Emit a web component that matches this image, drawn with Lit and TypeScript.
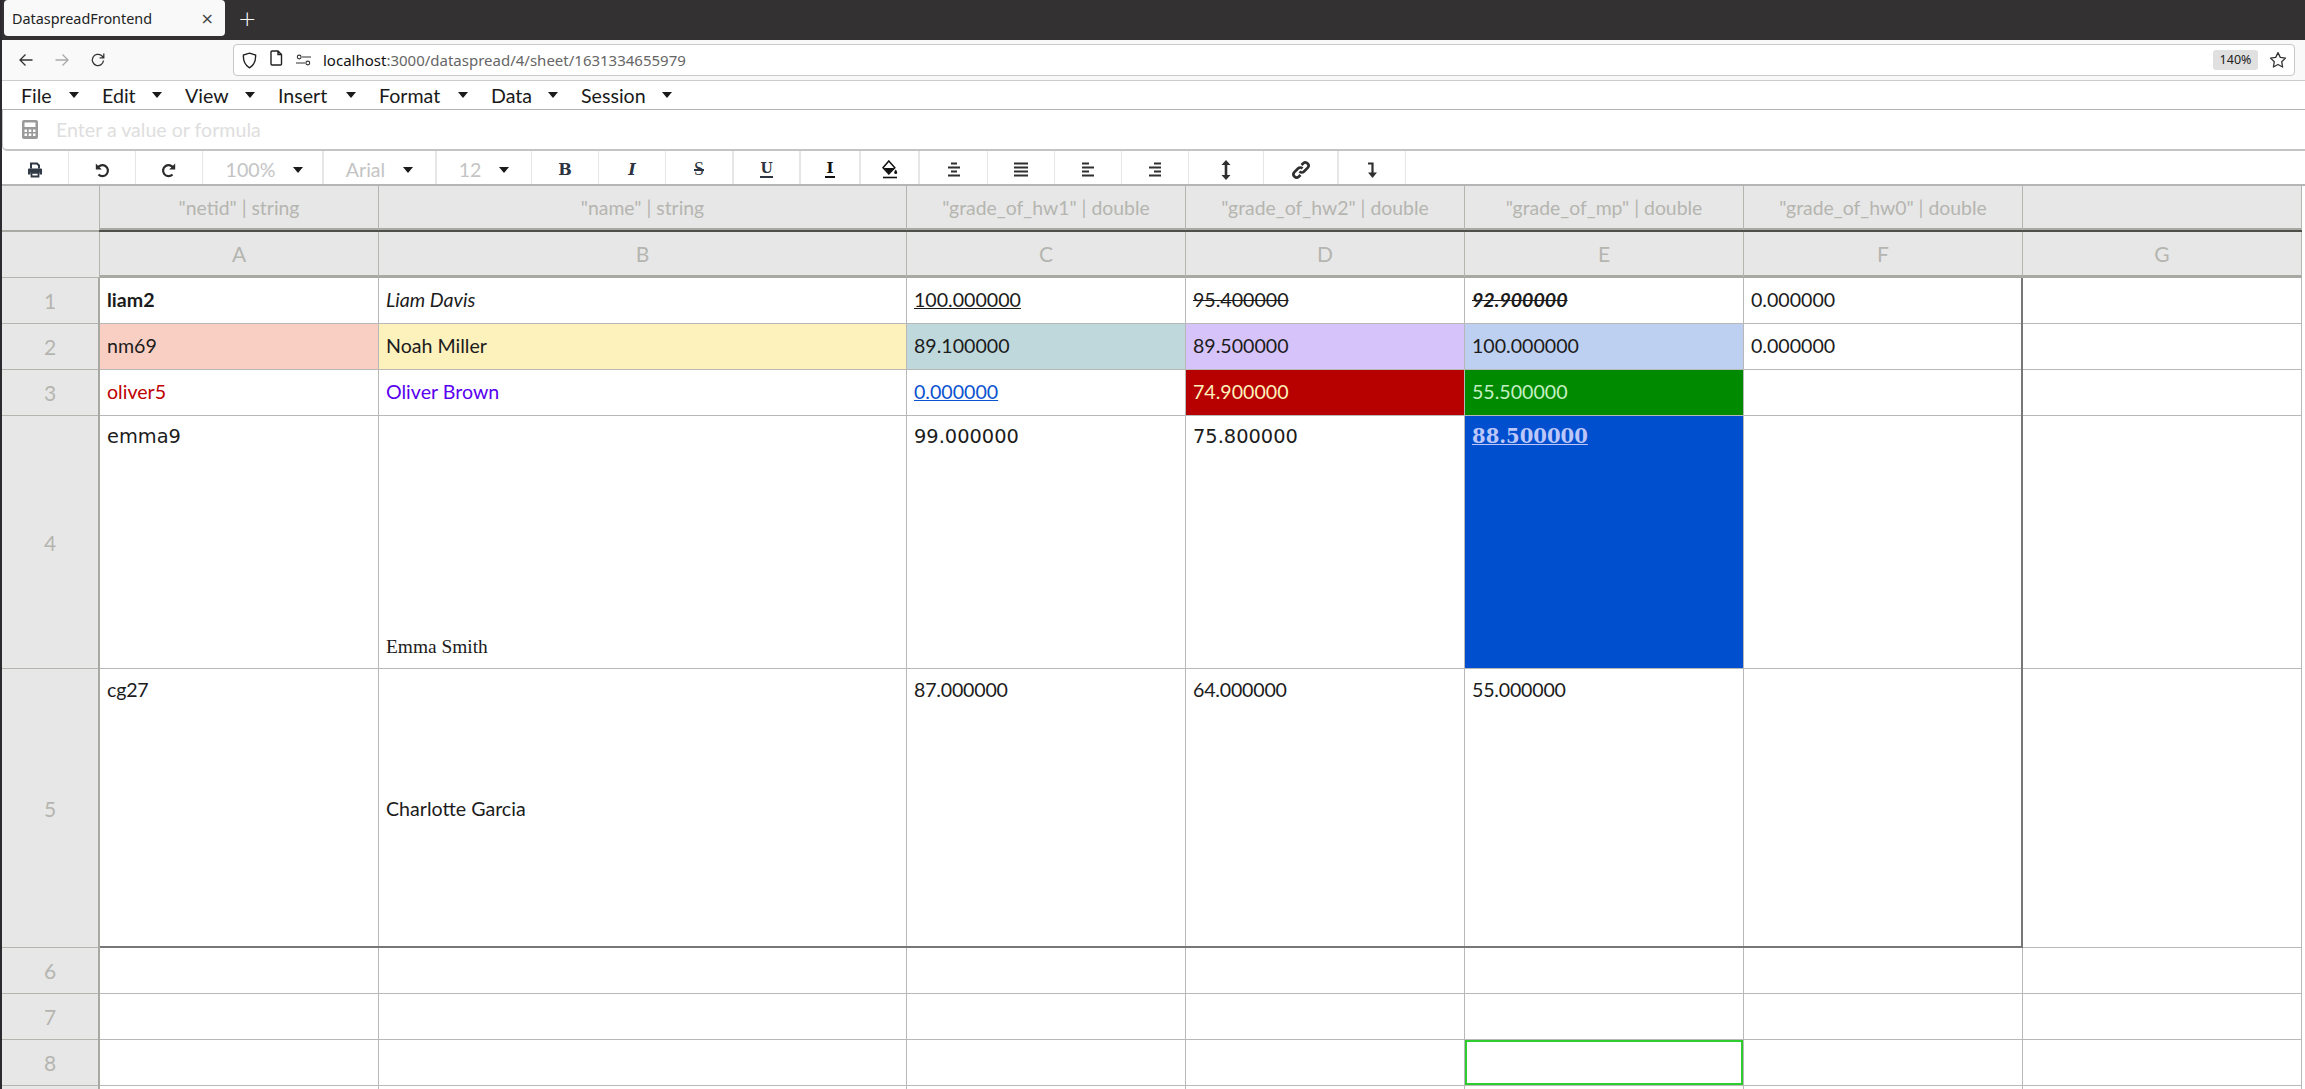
import { LitElement, html, css, svg, nothing } from 'lit';
import { customElement } from 'lit/decorators.js';

interface Cell {
  text?: string;
  cls?: string;
  bg?: string;
  color?: string;
}

const MENUS = [
  { label: 'File', w: 81 },
  { label: 'Edit', w: 83 },
  { label: 'View', w: 93 },
  { label: 'Insert', w: 101 },
  { label: 'Format', w: 112 },
  { label: 'Data', w: 90 },
  { label: 'Session', w: 114 },
];

const COLUMNS = ['A', 'B', 'C', 'D', 'E', 'F', 'G'];
const HEADS = ['"netid" | string', '"name" | string', '"grade_of_hw1" | double', '"grade_of_hw2" | double', '"grade_of_mp" | double', '"grade_of_hw0" | double', ''];

const ROWS: { h: number; cells: Cell[] }[] = [
  {
    h: 46,
    cells: [
      { text: 'liam2', cls: 'bold' },
      { text: 'Liam Davis', cls: 'ital' },
      { text: '100.000000', cls: 'under' },
      { text: '95.400000', cls: 'strike' },
      { text: '92.900000', cls: 'strike bold ital' },
      { text: '0.000000' },
      {},
    ],
  },
  {
    h: 46,
    cells: [
      { text: 'nm69', bg: '#f9cfc3' },
      { text: 'Noah Miller', bg: '#fdf1bc' },
      { text: '89.100000', bg: '#bed8dc' },
      { text: '89.500000', bg: '#d6c3fa' },
      { text: '100.000000', bg: '#bdd0f1' },
      { text: '0.000000' },
      {},
    ],
  },
  {
    h: 46,
    cells: [
      { text: 'oliver5', color: '#c00000' },
      { text: 'Oliver Brown', color: '#5a00f0' },
      { text: '0.000000', cls: 'under', color: '#0b53d0' },
      { text: '74.900000', bg: '#b70000', color: '#fdf1bc' },
      { text: '55.500000', bg: '#008a00', color: '#c4f0c4' },
      {},
      {},
    ],
  },
  {
    h: 253,
    cells: [
      { text: 'emma9', cls: 'wide top' },
      { text: 'Emma Smith', cls: 'times bottom' },
      { text: '99.000000', cls: 'wide top' },
      { text: '75.800000', cls: 'wide top' },
      { text: '88.500000', cls: 'slab under top', bg: '#004fcf', color: '#bcc6f8' },
      {},
      {},
    ],
  },
  {
    h: 279,
    cells: [
      { text: 'cg27', cls: 'top big' },
      { text: 'Charlotte Garcia', cls: 'mid' },
      { text: '87.000000', cls: 'top big' },
      { text: '64.000000', cls: 'top big' },
      { text: '55.000000', cls: 'top big' },
      {},
      {},
    ],
  },
  { h: 46, cells: [{}, {}, {}, {}, {}, {}, {}] },
  { h: 46, cells: [{}, {}, {}, {}, {}, {}, {}] },
  { h: 46, cells: [{}, {}, {}, {}, { cls: 'picked' }, {}, {}] },
  { h: 46, cells: [{}, {}, {}, {}, {}, {}, {}] },
];

const icon = (w: number, h: number, box: string, body: unknown) =>
  html`<svg width=${w} height=${h} viewBox=${box}>${body}</svg>`;

const ICONS = {
  back: icon(16, 16, '0 0 16 16', svg`<path d="M14.5 8H2M7.5 2.5 2 8l5.5 5.5" fill="none" stroke="#333" stroke-width="1.3"/>`),
  fwd: icon(16, 16, '0 0 16 16', svg`<path d="M1.5 8H14M8.5 2.5 14 8l-5.5 5.5" fill="none" stroke="#aaa" stroke-width="1.3"/>`),
  reload: icon(16, 16, '0 0 16 16', svg`<path d="M13.5 8.5A5.6 5.6 0 1 1 11.5 3.6L13.5 5.5M13.8 1.6v4.2H9.6" fill="none" stroke="#333" stroke-width="1.3"/>`),
  shield: icon(15, 17, '0 0 15 17', svg`<path d="M7.5 1.2 13.6 3c.3 5.4-1.4 10-6.1 12.8C2.8 13 1.1 8.4 1.4 3z" fill="none" stroke="#222" stroke-width="1.4"/>`),
  doc: icon(13, 16, '0 0 13 16', svg`<path d="M2 1h6l3.5 3.5V14a1 1 0 0 1-1 1H2a1 1 0 0 1-1-1V2a1 1 0 0 1 1-1zM8 1v3.5h3.5" fill="none" stroke="#222" stroke-width="1.4"/>`),
  perms: icon(15, 12, '0 0 15 12', svg`<path d="M6 3h9M0 9h9" stroke="#333" stroke-width="1.2"/><circle cx="3.2" cy="3" r="1.9" fill="none" stroke="#333" stroke-width="1.1"/><circle cx="11.8" cy="9" r="1.9" fill="none" stroke="#333" stroke-width="1.1"/>`),
  star: icon(18, 18, '0 0 18 18', svg`<path d="m9 1.6 2.3 4.8 5.2.7-3.8 3.6.9 5.3L9 13.5 4.4 16l.9-5.3L1.5 7.1l5.2-.7z" fill="none" stroke="#333" stroke-width="1.3" stroke-linejoin="round"/>`),
  calc: icon(16, 19, '0 0 16 19', svg`<path fill-rule="evenodd" d="M2 0h12a2 2 0 0 1 2 2v15a2 2 0 0 1-2 2H2a2 2 0 0 1-2-2V2a2 2 0 0 1 2-2zM2.500 2.500V7h11V2.500zM2.500 9.500V12h2.500V9.500zm4.200 0V12h2.600V9.500zm4.300 0V12h2.500V9.500zM2.500 13.500V16h2.500v-2.500zm4.200 0V16h2.600v-2.500zm4.300 0V16h2.500v-2.500z" fill="#9a9a9a"/>`),
  print: icon(16, 16, '0 0 16 16', svg`<path d="M4 6.500V1.500h6l2 2v3" fill="none" stroke="#2f3a46" stroke-width="2"/><path d="M1 7.500a1 1 0 0 1 1-1h12a1 1 0 0 1 1 1v5h-2.500v-2h-9v2H1z" fill="#2f3a46"/><path d="M4.500 10.800h7v3.700h-7z" fill="none" stroke="#2f3a46" stroke-width="1.800"/>`),
  undo: icon(16, 16, '0 0 16 16', svg`<path d="M3.500 6.200A5.500 5.500 0 1 1 4.500 12.500" fill="none" stroke="#2b2b2b" stroke-width="2.200"/><path d="M1.800 1.500v6h6z" fill="#2b2b2b"/>`),
  redo: icon(16, 16, '0 0 16 16', svg`<path d="M12.500 6.200A5.500 5.500 0 1 0 11.500 12.500" fill="none" stroke="#2b2b2b" stroke-width="2.200"/><path d="M14.200 1.500v6h-6z" fill="#2b2b2b"/>`),
  fill: icon(16, 19, '0 0 16 19', svg`<path d="M6.800 1 1 7.800 6.800 14l6-6.200z" fill="none" stroke="#111" stroke-width="1.500"/><path d="M1.800 8h10.400l-5.400 5.600z" fill="#111"/><path d="M13.700 9.500c1 1.500 1.500 2.200 1.500 3a1.500 1.500 0 0 1-3 0c0-.8.500-1.500 1.500-3z" fill="#111"/><path d="M1 17.500h14" stroke="#111" stroke-width="1.600"/>`),
  alignC: icon(14, 15, '0 0 14 15', svg`<path d="M4 1.500h6M1 5.500h12M4 9.500h6M1 13.500h12" stroke="#2f2f2f" stroke-width="2"/>`),
  alignJ: icon(14, 15, '0 0 14 15', svg`<path d="M0 1.500h14M0 5.500h14M0 9.500h14M0 13.500h14" stroke="#2f2f2f" stroke-width="2"/>`),
  alignL: icon(14, 15, '0 0 14 15', svg`<path d="M1 1.500h7M1 5.500h12M1 9.500h7M1 13.500h12" stroke="#2f2f2f" stroke-width="2"/>`),
  alignR: icon(14, 15, '0 0 14 15', svg`<path d="M6 1.500h7M1 5.500h12M6 9.500h7M1 13.500h12" stroke="#2f2f2f" stroke-width="2"/>`),
  height: icon(10, 20, '0 0 10 20', svg`<path d="M5 3v14" stroke="#2f2f2f" stroke-width="2.600"/><path d="M5 0 9.500 5h-9zM5 20 .500 15h9z" fill="#2f2f2f"/>`),
  link: icon(20, 20, '0 0 20 20', svg`<path d="M8.500 11.500a3.200 3.200 0 0 0 4.500 0l3.800-3.800a3.200 3.200 0 0 0-4.500-4.500l-1.800 1.800M11.500 8.500a3.200 3.200 0 0 0-4.500 0l-3.800 3.800a3.200 3.200 0 0 0 4.500 4.500l1.800-1.800" fill="none" stroke="#2f2f2f" stroke-width="2.700"/>`),
  down: icon(10, 16, '0 0 10 16', svg`<path d="M1 1.500h4.500V11" fill="none" stroke="#2f2f2f" stroke-width="2.200"/><path d="M1 10.500h9L5.500 16z" fill="#2f2f2f"/>`),
};

@customElement('app-root')
export class AppRoot extends LitElement {
  static styles = css`
    :host {
      display: block;
      height: 1089px;
      overflow: hidden;
      background: #fff;
      font-family: 'Lato', sans-serif;
      border-left: 2px solid #2c2a2e;
      box-sizing: border-box;
    }

    /* browser chrome */
    .tabs {
      display: flex;
      align-items: flex-start;
      height: 40px;
      margin-left: -2px;
      padding-left: 4px;
      background: #333132;
      box-sizing: border-box;
    }
    .tab {
      display: flex;
      align-items: center;
      justify-content: space-between;
      width: 221px;
      height: 36px;
      padding: 0 11px 0 8px;
      box-sizing: border-box;
      background: #f9f9fa;
      border-radius: 4px;
      font: 14.400px 'Noto Sans', sans-serif;
      color: #222;
    }
    .close { font-size: 16px; color: #444; font-family: 'DejaVu Sans', sans-serif; }
    .plus {
      margin: 0 0 0 13px;
      height: 38px;
      color: #fff;
      font: 300 22px/38px 'DejaVu Sans', sans-serif;
    }
    .nav {
      display: flex;
      align-items: center;
      height: 41px;
      padding-right: 10px;
      box-sizing: border-box;
      background: #f9f9fa;
      border-bottom: 1px solid #ccc;
    }
    .nav-btns {
      display: flex;
      align-items: center;
      gap: 20px;
      width: 231px;
      padding-left: 16px;
      box-sizing: border-box;
    }
    .url {
      display: flex;
      align-items: center;
      flex: 1;
      height: 32px;
      padding: 0 7px 0 8px;
      box-sizing: border-box;
      background: #fff;
      border: 1px solid #c8c8c8;
      border-radius: 4px;
      font: 15px 'Noto Sans', sans-serif;
      color: #666;
    }
    .url svg { flex: none; }
    .url .doc { margin-left: 13px; }
    .url .perms { margin: 0 12px 0 13px; }
    .url b { font-weight: 400; color: #111; }
    .url .grow { flex: 1; }
    .zoom {
      width: 45px;
      height: 20px;
      margin-right: 11px;
      background: #e0e0e1;
      border-radius: 3px;
      font-size: 12.500px;
      line-height: 20px;
      text-align: center;
      color: #222;
    }

    /* app menus */
    .menus {
      display: flex;
      align-items: center;
      height: 29px;
      padding-left: 19px;
      box-sizing: border-box;
      border-bottom: 1px solid #b5b5b5;
      font-size: 19.600px;
      color: #1a1a1a;
    }
    .menu { display: flex; align-items: center; flex: none; }
    .menu span { flex: 1; }
    .caret {
      flex: none;
      width: 0;
      height: 0;
      border-style: solid;
      border-width: 6px 5.500px 0;
      border-color: #1a1a1a transparent transparent;
    }
    .menu .caret { margin-right: 23px; }
    .formula {
      display: flex;
      align-items: center;
      height: 41px;
      padding-left: 19px;
      box-sizing: border-box;
      border: 1px solid #c4c4c4;
      border-width: 0 0 2px 1px;
      border-radius: 0 0 0 5px;
      font-size: 19.600px;
      color: #dedede;
    }
    .formula svg { margin-right: 18px; }

    /* toolbar */
    .tools {
      display: flex;
      height: 33px;
      border-bottom: 2px solid #b5b5b5;
      box-sizing: content-box;
    }
    .tool {
      display: flex;
      align-items: center;
      justify-content: center;
      flex: none;
      height: 33px;
      padding-top: 4px;
      box-sizing: border-box;
      border-right: 1px solid #e6e6e6;
      color: #c4c4c4;
      font-size: 19.600px;
    }
    .tool.thick { border-right-width: 2px; }
    .tool.nudge { padding-left: 4px; }
    .tool .caret { margin-left: 18px; }
    .glyph { color: #2b3440; font-family: 'DejaVu Serif', serif; font-size: 16px; }
    .glyph.b { font-weight: 700; }
    .glyph.i { font-style: italic; font-weight: 700; }
    .glyph.s { text-decoration: line-through; text-decoration-thickness: 2px; font-family: 'Liberation Serif', serif; font-size: 18px; }
    .glyph.u { border-bottom: 2px solid #2b3440; line-height: 15px; font-weight: 700; font-size: 14px; }
    .glyph.t { color: #111; border-bottom: 2px solid #111; line-height: 15px; font-size: 15px; font-weight: 700; padding: 0 1px; }

    /* sheet */
    .sheet { position: relative; }
    .grid {
      display: grid;
      grid-template-columns: 96px 2px 279px 528px repeat(5, 279px);
      width: 2300px;
    }
    .hd {
      display: flex;
      align-items: center;
      justify-content: center;
      box-sizing: border-box;
      background: #e7e7e7;
      border-right: 1px solid #b5b5b0;
      color: #b5b5b0;
      font-size: 19.400px;
    }
    .h-a { height: 46px; border-bottom: 4px solid #a8a8a3; position: relative; }
    .h-a::after {
      content: '';
      position: absolute;
      left: -1px;
      right: -1px;
      bottom: -4px;
      height: 2px;
      background: #4f4f4c;
    }
    .h-b { height: 46px; border-bottom: 3px solid #a9a9a4; font-size: 21px; }
    .corner { grid-column: span 2; border-right: 1px solid #b5b5b0; }
    .corner.first { height: 46px; border-bottom: 2px solid #a9a9a4; }
    .corner.second { height: 46px; border-bottom: 1px solid #b5b5b0; }
    .num {
      font-size: 21px;
      border-bottom: 1px solid #b5b5b0;
      border-right: 0;
    }
    .rule { background: #a9a9a4; }
    .cell {
      display: flex;
      align-items: center;
      box-sizing: border-box;
      min-width: 0;
      padding: 0 6px 3px 7px;
      border-right: 1px solid #b8b8b8;
      border-bottom: 1px solid #b8b8b8;
      font-size: 19.600px;
      color: #1c1c1c;
      white-space: nowrap;
    }
    .bold { font-weight: 700; }
    .ital { font-style: italic; }
    .under span { text-decoration: underline; }
    .strike span { text-decoration: line-through; }
    .mid { padding-bottom: 0; }
    .top { align-items: flex-start; padding-top: 9px; }
    .big { font-size: 19.600px; letter-spacing: -0.200px; }
    .wide { font-family: 'DejaVu Sans', sans-serif; font-size: 19.400px; }
    .times { font-family: 'Liberation Serif', serif; font-size: 19.400px; }
    .bottom { align-items: flex-end; padding-bottom: 10px; }
    .slab { font-family: 'DejaVu Serif', serif; font-weight: 700; font-size: 19.600px; }
    .picked { box-shadow: inset 0 0 0 2px #2ecc2e; }
    .range {
      position: absolute;
      left: 98px;
      top: 92px;
      width: 1923px;
      height: 670px;
      box-sizing: border-box;
      border: solid #777;
      border-width: 0 2px 2px 0;
      pointer-events: none;
    }
  `;

  private _toolBtn(w: number, body: unknown, cls = '') {
    return html`<div class="tool ${cls}" style="width:${w}px">${body}</div>`;
  }

  private _drop(label: string) {
    return html`<span>${label}</span><i class="caret"></i>`;
  }

  render() {
    return html`
      <div class="tabs">
        <div class="tab"><span>DataspreadFrontend</span><span class="close">×</span></div>
        <div class="plus">+</div>
      </div>
      <div class="nav">
        <div class="nav-btns">${ICONS.back}${ICONS.fwd}${ICONS.reload}</div>
        <div class="url">
          ${ICONS.shield}
          <span class="doc">${ICONS.doc}</span>
          <span class="perms">${ICONS.perms}</span>
          <span><b>localhost</b>:3000/dataspread/4/sheet/1631334655979</span>
          <span class="grow"></span>
          <div class="zoom">140%</div>
          ${ICONS.star}
        </div>
      </div>
      <div class="menus">
        ${MENUS.map(
          (m) => html`<div class="menu" style="width:${m.w}px"><span>${m.label}</span><i class="caret"></i></div>`,
        )}
      </div>
      <div class="formula">${ICONS.calc}<span>Enter a value or formula</span></div>
      <div class="tools">
        ${this._toolBtn(67, ICONS.print)}
        ${this._toolBtn(67, ICONS.undo)}
        ${this._toolBtn(67, ICONS.redo)}
        ${this._toolBtn(121, this._drop('100%'), 'thick nudge')}
        ${this._toolBtn(113, this._drop('Arial'), 'thick')}
        ${this._toolBtn(95, this._drop('12'))}
        ${this._toolBtn(67, html`<span class="glyph b">B</span>`)}
        ${this._toolBtn(67, html`<span class="glyph i">I</span>`)}
        ${this._toolBtn(68, html`<span class="glyph s">S</span>`, 'thick')}
        ${this._toolBtn(67, html`<span class="glyph u">U</span>`, 'thick')}
        ${this._toolBtn(60, html`<span class="glyph t">I</span>`, 'thick')}
        ${this._toolBtn(59, ICONS.fill, 'thick')}
        ${this._toolBtn(68, ICONS.alignC)}
        ${this._toolBtn(67, ICONS.alignJ)}
        ${this._toolBtn(67, ICONS.alignL)}
        ${this._toolBtn(67, ICONS.alignR)}
        ${this._toolBtn(75, ICONS.height)}
        ${this._toolBtn(75, ICONS.link, 'thick')}
        ${this._toolBtn(67, ICONS.down)}
      </div>
      <div class="sheet">
        <div class="grid">
          <div class="hd corner first"></div>
          ${HEADS.map((h) => html`<div class="hd h-a">${h || nothing}</div>`)}
          <div class="hd corner second"></div>
          ${COLUMNS.map((c) => html`<div class="hd h-b">${c}</div>`)}
          ${ROWS.map(
            (r, i) => html`
              <div class="hd num" style="height:${r.h}px">${i < 8 ? i + 1 : nothing}</div>
              <div class="rule"></div>
              ${r.cells.map(
                (c) => html`<div
                  class="cell ${c.cls ?? ''}"
                  style="height:${r.h}px;${c.bg ? `background:${c.bg};` : ''}${c.color ? `color:${c.color};` : ''}"
                ><span>${c.text ?? ''}</span></div>`,
              )}
            `,
          )}
        </div>
        <div class="range"></div>
      </div>
    `;
  }
}
